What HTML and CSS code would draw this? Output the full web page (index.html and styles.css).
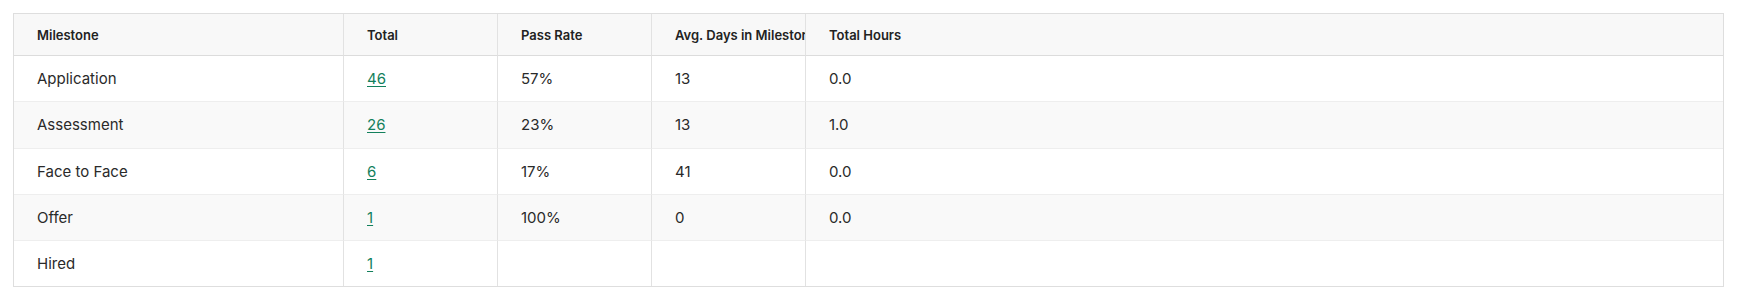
FILE: index.html
```html
<!DOCTYPE html>
<html lang="en">
<head>
<meta charset="utf-8">
<title>Milestones</title>
<link rel="stylesheet" href="styles.css">
</head>
<body>
<div class="wrap">
  <table class="grid">
    <colgroup>
      <col class="c-milestone">
      <col class="c-num">
      <col class="c-num">
      <col class="c-num">
      <col>
    </colgroup>
    <thead>
      <tr>
        <th>Milestone</th>
        <th>Total</th>
        <th>Pass Rate</th>
        <th>Avg. Days in Milestone</th>
        <th>Total Hours</th>
      </tr>
    </thead>
    <tbody>
      <tr>
        <td>Application</td>
        <td><a href="#">46</a></td>
        <td>57%</td>
        <td>13</td>
        <td>0.0</td>
      </tr>
      <tr>
        <td>Assessment</td>
        <td><a href="#">26</a></td>
        <td>23%</td>
        <td>13</td>
        <td>1.0</td>
      </tr>
      <tr>
        <td>Face to Face</td>
        <td><a href="#">6</a></td>
        <td>17%</td>
        <td>41</td>
        <td>0.0</td>
      </tr>
      <tr>
        <td>Offer</td>
        <td><a href="#">1</a></td>
        <td>100%</td>
        <td>0</td>
        <td>0.0</td>
      </tr>
      <tr>
        <td>Hired</td>
        <td><a href="#">1</a></td>
        <td></td>
        <td></td>
        <td></td>
      </tr>
    </tbody>
  </table>
</div>
</body>
</html>
```

FILE: styles.css
```css
html, body {
  margin: 0;
  padding: 0;
  background: #ffffff;
}

body {
  font-family: Inter, "Liberation Sans", sans-serif;
  color: #222222;
}

.wrap {
  padding: 13px;
}

.grid {
  width: 100%;
  table-layout: fixed;
  border-collapse: separate;
  border-spacing: 0;
  border: 1px solid #dedede;
}

.c-milestone { width: 329px; }
.c-num { width: 154px; }

.grid th,
.grid td {
  text-align: left;
  vertical-align: middle;
  padding: 0 5px 0 23px;
  white-space: nowrap;
  overflow: hidden;
  border-left: 1px solid #e2e2e2;
}

.grid th:first-child,
.grid td:first-child {
  border-left: none;
}

.grid th {
  height: 41px;
  font-size: 13px;
  font-weight: 600;
  color: #222222;
  background: #f8f8f8;
  border-bottom: 1px solid #dcdcdc;
}

.grid td {
  height: 45.25px;
  font-size: 15px;
  font-weight: 400;
  color: #2a2a2a;
  border-bottom: 1px solid #eeeeee;
}

.grid tbody tr:nth-child(even) td {
  background: #f9f9f9;
}

.grid tbody tr:last-child td {
  border-bottom: none;
}

.grid a {
  color: #13805c;
  text-decoration: underline;
  text-underline-offset: 2px;
}
```
